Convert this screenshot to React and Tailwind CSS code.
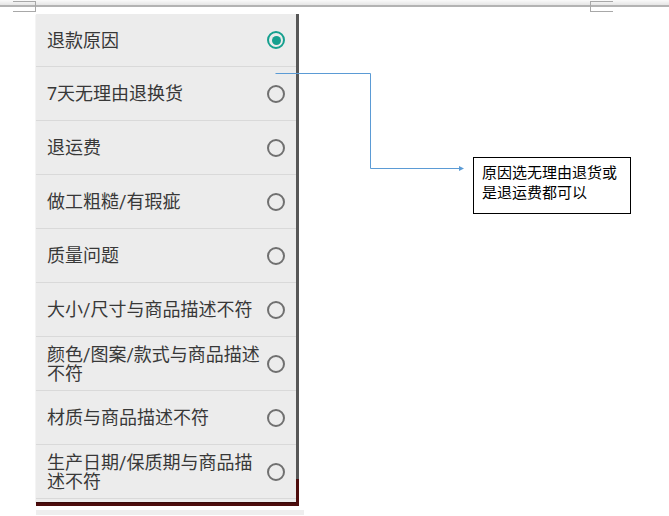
import React from 'react';

const reasons = [
  { label: '退款原因', checked: true, h: 'h-[52px]' },
  { label: '7天无理由退换货' },
  { label: '退运费' },
  { label: '做工粗糙/有瑕疵' },
  { label: '质量问题' },
  { label: '大小/尺寸与商品描述不符' },
  { label: '颜色/图案/款式与商品描述不符' },
  { label: '材质与商品描述不符' },
  { label: '生产日期/保质期与商品描述不符' },
];

const Radio = ({ checked }) =>
  checked ? (
    <span className="flex h-[18px] w-[18px] items-center justify-center rounded-full border-2 border-[#16a08f]">
      <span className="h-[9px] w-[9px] rounded-full bg-[#16a08f]" />
    </span>
  ) : (
    <span className="h-[18px] w-[18px] rounded-full border-2 border-[#707070]" />
  );

const Row = ({ label, checked, h, first }) => (
  <div
    className={`flex ${h || 'h-[54px]'} items-center justify-between pl-[11px] pr-[11px] ${
      first ? '' : 'border-t border-[#d9d9d9]'
    }`}
  >
    <span className="w-[214px] text-[18px] leading-[19px] text-[#383838]">{label}</span>
    <Radio checked={checked} />
  </div>
);

// word-style page corner marks
const Corner = ({ className }) => (
  <div className={`absolute top-[1px] h-[11px] w-[23px] border-y border-[#a8a8a8] ${className}`} />
);

export default function App() {
  return (
    <div
      className="relative h-[516px] w-[669px] overflow-hidden bg-white"
      style={{ fontFamily: 'Roboto, "Noto Sans CJK SC", sans-serif' }}
    >
      <div className="h-[5px] bg-gradient-to-b from-[#fafafa] to-[#e6e6e6]" />
      <div className="h-[2px] bg-[#b3b3b3]" />
      <Corner className="left-[13px] border-r" />
      <Corner className="left-[590px] border-l" />

      <div className="ml-[36px] mt-[7px] w-[263px]">
        <div className="flex">
          <div className="w-[260px] bg-[#ececec] pb-[3px] shadow-[0_1px_1px_rgba(0,0,0,0.25)]">
            {reasons.map((r, i) => (
              <Row key={r.label} {...r} first={i === 0} />
            ))}
            <div className="h-px bg-[#d9d9d9]" />
          </div>
          <div className="flex w-[3px] flex-col">
            <div className="flex-1 bg-[#575757]" />
            <div className="h-[23px] bg-[#4d0c0c]" />
          </div>
        </div>
        <div className="h-[4px] bg-[#4d0c0c]" />
        <div className="mt-[4px] h-[5px] w-[268px] bg-[#eeeeee]" />
      </div>

      <svg className="absolute left-0 top-0" width="669" height="516">
        <polyline
          points="275.5,73.5 370.5,73.5 370.5,168.5 462,168.5"
          fill="none"
          stroke="#5b9bd5"
          strokeWidth="1"
        />
        <path d="M459 166 L464 168.5 L459 171 Z" fill="#5b9bd5" />
      </svg>

      <div
        className="absolute left-[473px] top-[157px] h-[57px] w-[158px] border border-black bg-white px-[8px] pt-[4px] text-[15px] leading-[20px] text-black"
        style={{ fontFamily: '"Noto Sans CJK SC", sans-serif' }}
      >
        <div>原因选无理由退货或</div>
        <div>是退运费都可以</div>
      </div>
    </div>
  );
}
